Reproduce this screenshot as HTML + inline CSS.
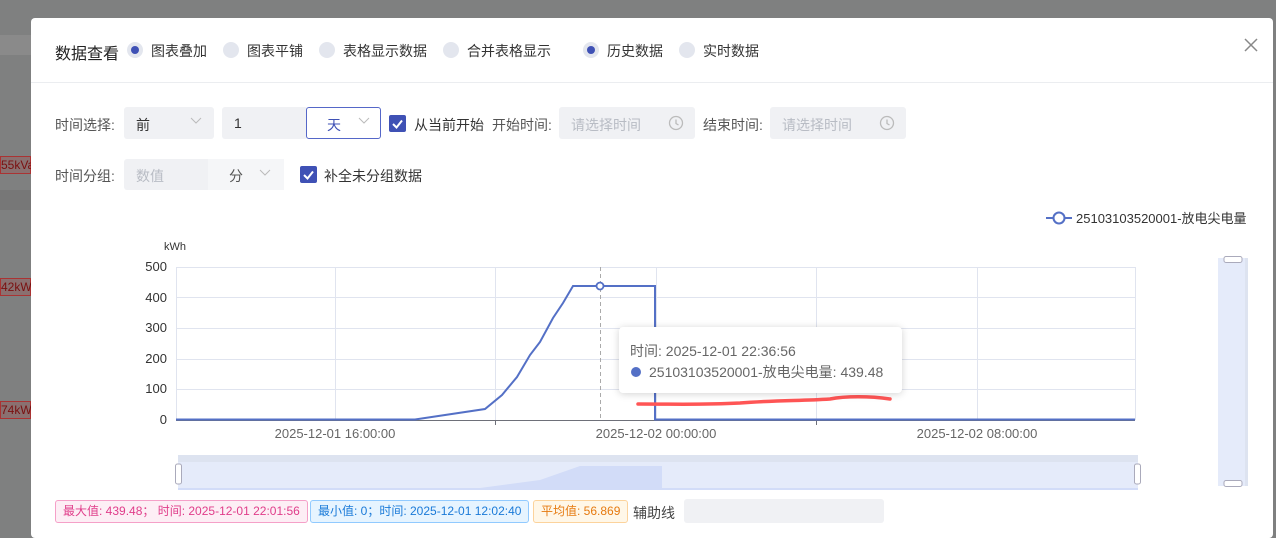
<!DOCTYPE html>
<html><head><meta charset="utf-8"><style>
*{margin:0;padding:0;box-sizing:border-box}
body{width:1276px;height:524px;overflow:hidden;background:#7f8080;font-family:"Liberation Sans","Noto Sans CJK SC",sans-serif;font-size:14px;color:#333;position:relative}
.a{position:absolute}
.modal{left:31px;top:18px;width:1242px;height:520px;background:#fff;border-radius:4px}
.rad{width:16px;height:16px;border-radius:50%;background:#e3e6ee}
.rad.on::after{content:"";position:absolute;left:4px;top:4px;width:8px;height:8px;border-radius:50%;background:#3f51b5}
.box{background:#f0f1f4;border-radius:3px}
.ph{color:#b8bcc4}
.chk{width:17px;height:17px;background:#3f51b5;border-radius:2px}
.tag{height:23px;border:1px solid;border-radius:3px;font-size:12px;line-height:21px;padding:0 7px}
</style></head><body>
<div class="a" style="left:0;top:35px;width:31px;height:20px;background:#8a8a8a"></div>
<div class="a" style="left:0;top:190px;width:31px;height:20px;background:#777"></div>
<div class="a" style="left:0;top:156px;width:31px;height:18px;border:1px solid #a33;color:#7a1010;font-size:12px;line-height:16px;text-align:right;background:#8a7070">55kVa</div>
<div class="a" style="left:0;top:278px;width:31px;height:18px;border:1px solid #a33;color:#7a1010;font-size:12px;line-height:16px;text-align:right;background:#8a7070">42kWh</div>
<div class="a" style="left:0;top:401px;width:31px;height:18px;border:1px solid #a33;color:#7a1010;font-size:12px;line-height:16px;text-align:right;background:#8a7070">74kWh</div>
<div class="a modal"></div>
<div class="a" style="left:31px;top:82px;width:1242px;height:1px;background:#ebedf0"></div>
<div class="a" style="left:55px;top:40px;font-size:16px;color:#222">数据查看</div>
<div class="a rad on" style="left:127px;top:42px"></div><div class="a" style="left:151px;top:41px">图表叠加</div>
<div class="a rad" style="left:223px;top:42px"></div><div class="a" style="left:247px;top:41px">图表平铺</div>
<div class="a rad" style="left:319px;top:42px"></div><div class="a" style="left:343px;top:41px">表格显示数据</div>
<div class="a rad" style="left:443px;top:42px"></div><div class="a" style="left:467px;top:41px">合并表格显示</div>
<div class="a rad on" style="left:583px;top:42px"></div><div class="a" style="left:607px;top:41px">历史数据</div>
<div class="a rad" style="left:679px;top:42px"></div><div class="a" style="left:703px;top:41px">实时数据</div>
<svg class="a" style="left:1244px;top:38px" width="14" height="14"><path d="M1 1L13 13M13 1L1 13" stroke="#888" stroke-width="1.5"/></svg>

<div class="a" style="left:55px;top:115px;color:#555">时间选择:</div>
<div class="a box" style="left:124px;top:107px;width:90px;height:32px"></div><div class="a" style="left:136px;top:115px">前</div>
<svg class="a" style="left:190px;top:117px" width="12" height="8"><path d="M1 1L6 6L11 1" stroke="#bbb" fill="none"/></svg>
<div class="a box" style="left:222px;top:107px;width:86px;height:32px"></div><div class="a" style="left:234px;top:115px">1</div>
<div class="a" style="left:306px;top:107px;width:75px;height:32px;border:1px solid #5567c8;border-radius:3px;background:#fff"></div><div class="a" style="left:327px;top:115px;color:#3f51b5">天</div>
<svg class="a" style="left:358px;top:117px" width="12" height="8"><path d="M1 1L6 6L11 1" stroke="#bbb" fill="none"/></svg>
<div class="a chk" style="left:389px;top:115px"></div><svg class="a" style="left:389px;top:115px" width="17" height="17"><path d="M4 9l3.5 3.5L13 5.5" stroke="#fff" stroke-width="2" fill="none"/></svg>
<div class="a" style="left:414px;top:115px">从当前开始</div>
<div class="a" style="left:492px;top:115px;color:#555">开始时间:</div>
<div class="a box" style="left:559px;top:107px;width:136px;height:32px"></div><div class="a ph" style="left:571px;top:115px">请选择时间</div>
<svg class="a" style="left:668px;top:115px" width="16" height="16"><circle cx="8" cy="8" r="6.5" stroke="#bbb" stroke-width="1.3" fill="none"/><path d="M8 4.5V8.5L10.5 10" stroke="#bbb" stroke-width="1.3" fill="none"/></svg>
<div class="a" style="left:703px;top:115px;color:#555">结束时间:</div>
<div class="a box" style="left:770px;top:107px;width:136px;height:32px"></div><div class="a ph" style="left:782px;top:115px">请选择时间</div>
<svg class="a" style="left:879px;top:115px" width="16" height="16"><circle cx="8" cy="8" r="6.5" stroke="#bbb" stroke-width="1.3" fill="none"/><path d="M8 4.5V8.5L10.5 10" stroke="#bbb" stroke-width="1.3" fill="none"/></svg>

<div class="a" style="left:55px;top:166px;color:#555">时间分组:</div>
<div class="a box" style="left:124px;top:159px;width:160px;height:31px"></div>
<div class="a" style="left:208px;top:159px;width:76px;height:31px;background:#f5f6f8"></div>
<div class="a ph" style="left:136px;top:166px">数值</div><div class="a" style="left:229px;top:166px;color:#555">分</div>
<svg class="a" style="left:259px;top:169px" width="12" height="8"><path d="M1 1L6 6L11 1" stroke="#bbb" fill="none"/></svg>
<div class="a chk" style="left:300px;top:166px"></div><svg class="a" style="left:300px;top:166px" width="17" height="17"><path d="M4 9l3.5 3.5L13 5.5" stroke="#fff" stroke-width="2" fill="none"/></svg>
<div class="a" style="left:324px;top:166px">补全未分组数据</div>

<svg class="a" style="left:0;top:0" width="1276" height="524" font-family="Liberation Sans,Noto Sans CJK SC,sans-serif">
<line x1="1046" y1="218" x2="1072" y2="218" stroke="#5470c6" stroke-width="2"/><circle cx="1059" cy="218" r="5.5" fill="#fff" stroke="#5470c6" stroke-width="2"/>
<text x="1076" y="223" font-size="13" fill="#333">25103103520001-放电尖电量</text>
<text x="164" y="250" font-size="11" fill="#333">kWh</text>
<g stroke="#e0e4ef" stroke-width="1">
<line x1="176" y1="267.5" x2="1135" y2="267.5"/><line x1="176" y1="297.5" x2="1135" y2="297.5"/><line x1="176" y1="328.5" x2="1135" y2="328.5"/><line x1="176" y1="359.5" x2="1135" y2="359.5"/><line x1="176" y1="389.5" x2="1135" y2="389.5"/>
<line x1="335.5" y1="267" x2="335.5" y2="420"/><line x1="495.5" y1="267" x2="495.5" y2="420"/><line x1="656.5" y1="267" x2="656.5" y2="420"/><line x1="816.5" y1="267" x2="816.5" y2="420"/><line x1="977.5" y1="267" x2="977.5" y2="420"/><line x1="1135.5" y1="267" x2="1135.5" y2="420"/><line x1="176.5" y1="267" x2="176.5" y2="420"/>
</g>
<line x1="176" y1="420.5" x2="1135" y2="420.5" stroke="#6e7079"/>
<line x1="495.5" y1="420" x2="495.5" y2="425" stroke="#6e7079"/><line x1="816.5" y1="420" x2="816.5" y2="425" stroke="#6e7079"/>
<g font-size="13" fill="#333" text-anchor="end"><text x="167" y="271">500</text><text x="167" y="302">400</text><text x="167" y="332">300</text><text x="167" y="363">200</text><text x="167" y="393">100</text><text x="167" y="424">0</text></g>
<g font-size="13" fill="#666" text-anchor="middle"><text x="335" y="438">2025-12-01 16:00:00</text><text x="656" y="438">2025-12-02 00:00:00</text><text x="977" y="438">2025-12-02 08:00:00</text></g>
<line x1="600.5" y1="267" x2="600.5" y2="420" stroke="#aaa" stroke-dasharray="4,3"/>
<path d="M176 419.5H415L485 409L502 395L517 377L530 355L540 342L553 318L563 303L573 286H655V419.5H1135" fill="none" stroke="#5470c6" stroke-width="2"/>
<circle cx="600" cy="286" r="3.5" fill="#fff" stroke="#5470c6" stroke-width="1.8"/>
<path d="M638 404C680 404 700 405 740 403C780 400 800 401 830 399C845 396 870 396 890 399" fill="none" stroke="#f55" stroke-width="3.5" stroke-linecap="round"/>
<rect x="178" y="455" width="960" height="35" fill="#e5ebfa"/><rect x="178" y="455" width="960" height="7" fill="#dde3f0"/>
<path d="M178 488H480L540 480L580 466H662V488H1138V490H178Z" fill="#d2dcf8"/>
<rect x="175.5" y="464" width="6" height="20" rx="2" fill="#fff" stroke="#aab"/><rect x="1134.5" y="464" width="6" height="20" rx="2" fill="#fff" stroke="#aab"/>
<rect x="1218" y="258" width="30" height="228" fill="#e5ebfa"/><rect x="1245" y="258" width="3" height="228" fill="#dde3f0"/>
<rect x="1224" y="256.5" width="18" height="6" rx="2" fill="#fff" stroke="#aab"/><rect x="1224" y="480.5" width="18" height="6" rx="2" fill="#fff" stroke="#aab"/>
</svg>

<div class="a" style="left:619px;top:327px;width:283px;height:66px;background:#fff;border-radius:4px;box-shadow:0 1px 8px rgba(0,0,0,.18)"></div>
<div class="a" style="left:630px;top:341px;color:#666;font-size:14px">时间: 2025-12-01 22:36:56</div>
<div class="a" style="left:631px;top:367px;width:10px;height:10px;border-radius:50%;background:#5470c6"></div>
<div class="a" style="left:649px;top:362px;color:#666;font-size:14px">25103103520001-放电尖电量: 439.48</div>

<div class="a tag" style="left:55px;top:500px;color:#e03d8a;border-color:#f5a0c8;background:#fdeef5">最大值: 439.48；&nbsp;时间: 2025-12-01 22:01:56</div>
<div class="a tag" style="left:310px;top:500px;color:#1a7ad8;border-color:#91caff;background:#e6f4ff">最小值: 0；时间: 2025-12-01 12:02:40</div>
<div class="a tag" style="left:533px;top:500px;color:#e67a10;border-color:#fcd39c;background:#fff7e8">平均值: 56.869</div>
<div class="a" style="left:633px;top:503px;color:#444">辅助线</div>
<div class="a box" style="left:684px;top:499px;width:200px;height:24px"></div>
</body></html>
